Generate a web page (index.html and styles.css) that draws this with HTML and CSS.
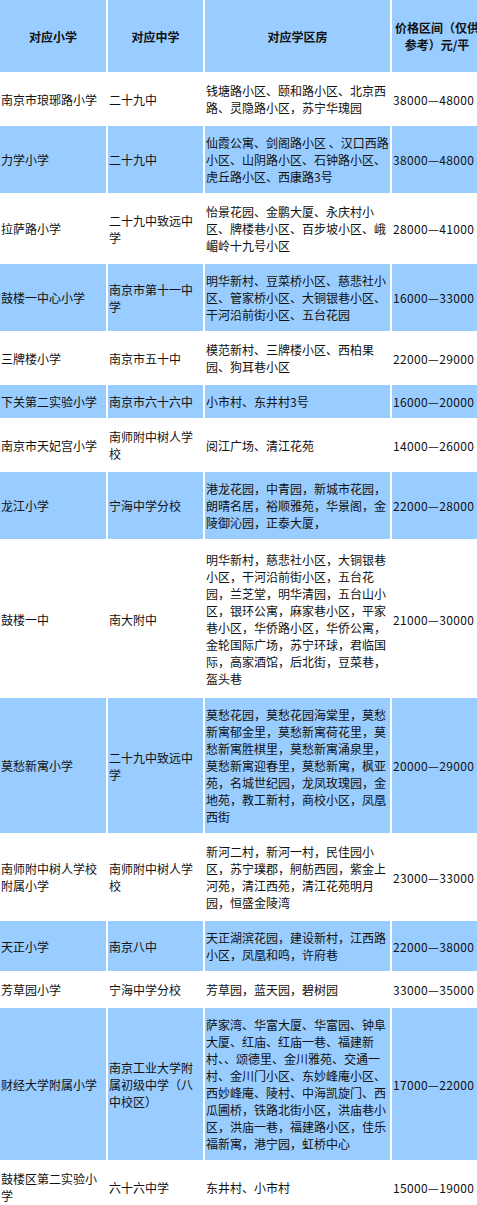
FILE: index.html
```html
<!DOCTYPE html>
<html lang="zh-CN">
<head>
<meta charset="utf-8">
<title>学区房</title>
<link rel="stylesheet" href="styles.css">
</head>
<body>
<table class="grid">
  <colgroup>
    <col class="c1"><col class="c2"><col class="c3"><col class="c4">
  </colgroup>
  <thead>
    <tr class="head">
      <th>对应小学</th><th>对应中学</th><th>对应学区房</th><th>价格区间（仅供参考）元/平</th>
    </tr>
  </thead>
  <tbody>
    <tr>
      <td>南京市琅琊路小学</td><td>二十九中</td><td>钱塘路小区、颐和路小区、北京西路、灵隐路小区，苏宁华瑰园</td><td class="price">38000—48000</td>
    </tr>
    <tr class="blue">
      <td>力学小学</td><td>二十九中</td><td>仙霞公寓、剑阁路小区 、汉口西路小区、山阴路小区、石钟路小区、虎丘路小区、西康路3号</td><td class="price">38000—48000</td>
    </tr>
    <tr>
      <td>拉萨路小学</td><td>二十九中致远中学</td><td>怡景花园、金鹏大厦、永庆村小区、牌楼巷小区、百步坡小区、峨嵋岭十九号小区</td><td class="price">28000—41000</td>
    </tr>
    <tr class="blue">
      <td>鼓楼一中心小学</td><td>南京市第十一中学</td><td>明华新村、豆菜桥小区、慈悲社小区、管家桥小区、大铜银巷小区、干河沿前街小区、五台花园</td><td class="price">16000—33000</td>
    </tr>
    <tr>
      <td>三牌楼小学</td><td>南京市五十中</td><td>模范新村、三牌楼小区、西柏果园、狗耳巷小区</td><td class="price">22000—29000</td>
    </tr>
    <tr class="blue">
      <td>下关第二实验小学</td><td>南京市六十六中</td><td>小市村、东井村3号</td><td class="price">16000—20000</td>
    </tr>
    <tr>
      <td>南京市天妃宫小学</td><td>南师附中树人学校</td><td>阅江广场、清江花苑</td><td class="price">14000—26000</td>
    </tr>
    <tr class="blue">
      <td>龙江小学</td><td>宁海中学分校</td><td>港龙花园，中青园，新城市花园，朗晴名居，裕顺雅苑，华景阁，金陵御沁园，正泰大厦，</td><td class="price">22000—28000</td>
    </tr>
    <tr class="tall">
      <td>鼓楼一中</td><td>南大附中</td><td>明华新村，慈悲社小区，大铜银巷小区，干河沿前街小区，五台花园，兰芝堂，明华清园，五台山小区，银环公寓，麻家巷小区，平家巷小区，华侨路小区，华侨公寓，金轮国际广场，苏宁环球，君临国际，高家酒馆，后北街，豆菜巷，盔头巷</td><td class="price">21000—30000</td>
    </tr>
    <tr class="blue">
      <td>莫愁新寓小学</td><td>二十九中致远中学</td><td>莫愁花园，莫愁花园海棠里，莫愁新寓郁金里，莫愁新寓荷花里，莫愁新寓胜棋里，莫愁新寓涌泉里，莫愁新寓迎春里，莫愁新寓，枫亚苑，名城世纪园，龙凤玫瑰园，金地苑，教工新村，商校小区，凤凰西街</td><td class="price">20000—29000</td>
    </tr>
    <tr>
      <td>南师附中树人学校附属小学</td><td>南师附中树人学校</td><td>新河二村，新河一村，民佳园小区，苏宁璞郡，舸舫西园，紫金上河苑，清江西苑，清江花苑明月园，恒盛金陵湾</td><td class="price">23000—33000</td>
    </tr>
    <tr class="blue">
      <td>天正小学</td><td>南京八中</td><td>天正湖滨花园，建设新村，江西路小区，凤凰和鸣，许府巷</td><td class="price">22000—38000</td>
    </tr>
    <tr>
      <td>芳草园小学</td><td>宁海中学分校</td><td>芳草园，蓝天园，碧树园</td><td class="price">33000—35000</td>
    </tr>
    <tr class="blue">
      <td>财经大学附属小学</td><td>南京工业大学附属初级中学（八中校区）</td><td>萨家湾、华富大厦、华富园、钟阜大厦、红庙、红庙一巷、福建新村、、颂德里、金川雅苑、交通一村、金川门小区、东妙峰庵小区、西妙峰庵、陵村、中海凯旋门、西瓜圃桥，铁路北街小区，洪庙巷小区，洪庙一巷，福建路小区，佳乐福新寓，港宁园，虹桥中心</td><td class="price">17000—22000</td>
    </tr>
    <tr>
      <td>鼓楼区第二实验小学</td><td>六十六中学</td><td>东井村、小市村</td><td class="price">15000—19000</td>
    </tr>
  </tbody>
</table>
</body>
</html>
```

FILE: styles.css
```css
html {
  overflow: hidden;
  background: #ffffff;
}

body {
  margin: 0;
  font-family: "Noto Sans CJK SC", "Microsoft YaHei", sans-serif;
  font-size: 12px;
  line-height: 17px;
  color: #111111;
}

.grid {
  border-collapse: separate;
  border-spacing: 2px;
  table-layout: fixed;
  width: 486px;
  margin: -2px 0 0 -2px;
}

.c1 { width: 106px; }
.c2 { width: 95px; }
.c3 { width: 185px; }
.c4 { width: 90px; }

.grid th,
.grid td {
  padding: 8px 1px;
  vertical-align: middle;
  text-align: left;
  font-weight: normal;
  word-break: normal;
}

.grid .price {
  letter-spacing: 0.35px;
  white-space: nowrap;
}

.head th {
  height: 56px;
  background: #99ccff;
  text-align: center;
  font-weight: bold;
  color: #111111;
}

.blue td {
  background: #99ccff;
}

.tall td {
  padding-top: 10px;
  padding-bottom: 9px;
}
```
